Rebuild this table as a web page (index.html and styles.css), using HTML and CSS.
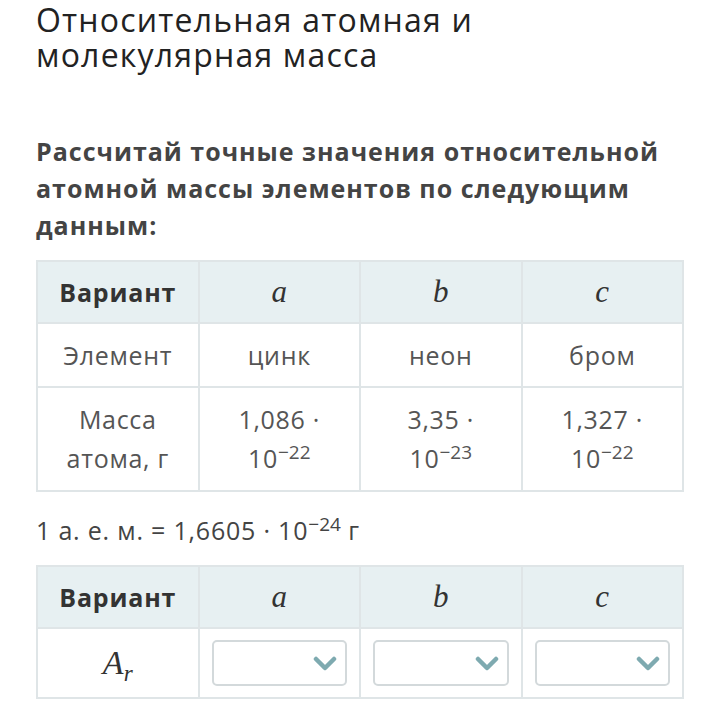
FILE: index.html
```html
<!DOCTYPE html>
<html lang="ru">
<head>
<meta charset="utf-8">
<link rel="stylesheet" href="styles.css">
</head>
<body>
<div class="page">
  <h1 class="title">Относительная атомная и<br>молекулярная масса</h1>
  <p class="task">Рассчитай точные значения относительной атомной массы элементов по следующим данным:</p>
  <table class="grid data">
    <tr class="head">
      <th class="label">Вариант</th>
      <th><span class="m">a</span></th>
      <th><span class="m">b</span></th>
      <th><span class="m">c</span></th>
    </tr>
    <tr class="r-el">
      <td>Элемент</td>
      <td>цинк</td>
      <td>неон</td>
      <td>бром</td>
    </tr>
    <tr class="r-mass">
      <td>Масса<br>атома, г</td>
      <td>1,086 ·<br>10<sup>−22</sup></td>
      <td>3,35 ·<br>10<sup>−23</sup></td>
      <td>1,327 ·<br>10<sup>−22</sup></td>
    </tr>
  </table>
  <p class="note">1 а. е. м. = 1,6605 · 10<sup>−24</sup> г</p>
  <table class="grid answer">
    <tr class="head">
      <th class="label">Вариант</th>
      <th><span class="m">a</span></th>
      <th><span class="m">b</span></th>
      <th><span class="m">c</span></th>
    </tr>
    <tr class="r-ans">
      <td><span class="m ar">A<sub>r</sub></span></td>
      <td><div class="select"><svg viewBox="0 0 24 15" width="24" height="15"><path d="M3 3 L12 12 L21 3" fill="none" stroke="#7eaab0" stroke-width="4.5" stroke-linecap="round" stroke-linejoin="round"/></svg></div></td>
      <td><div class="select"><svg viewBox="0 0 24 15" width="24" height="15"><path d="M3 3 L12 12 L21 3" fill="none" stroke="#7eaab0" stroke-width="4.5" stroke-linecap="round" stroke-linejoin="round"/></svg></div></td>
      <td><div class="select"><svg viewBox="0 0 24 15" width="24" height="15"><path d="M3 3 L12 12 L21 3" fill="none" stroke="#7eaab0" stroke-width="4.5" stroke-linecap="round" stroke-linejoin="round"/></svg></div></td>
    </tr>
  </table>
</div>
</body>
</html>
```
FILE: styles.css
```css
* { box-sizing: border-box; }
html, body { margin: 0; padding: 0; background: #fff; }
body { font-family: "Open Sans", "Noto Sans", sans-serif; color: #333; }
.page { padding: 2px 35px 0 36px; }
.title {
  margin: 0;
  font-weight: 400;
  font-size: 32px;
  line-height: 35px;
  color: #222;
  letter-spacing: 1.2px;
}
.task {
  margin: 61px 0 0 0;
  font-weight: 700;
  font-size: 25px;
  line-height: 37px;
  letter-spacing: 1px;
  color: #444;
}
.grid {
  border-collapse: collapse;
  width: 648px;
  table-layout: fixed;
  border: 2px solid #dfe5e7;
}
.grid th, .grid td {
  border: 2px solid #dfe5e7;
  text-align: center;
  vertical-align: middle;
  padding: 0 8px;
}
.data { margin-top: 16px; }
.head th { background: #e7f0f2; height: 62px; font-size: 25px; color: #333; }
.head th.label { font-weight: 700; color: #333; letter-spacing: 0.8px; }
.m { font-family: "Liberation Serif", "DejaVu Serif", serif; font-style: italic; font-weight: 400; font-size: 31px; color: #333; letter-spacing: 0; }
.r-el td { height: 64px; font-size: 25px; letter-spacing: 0.7px; color: #555; }
.r-mass td { height: 104px; font-size: 25px; letter-spacing: 0.7px; line-height: 39px; color: #555; }
sup { font-size: 0.76em; vertical-align: 0.5em; line-height: 0; letter-spacing: 0; }
.note { margin: 21px 0 0 0; font-size: 25px; line-height: 34px; letter-spacing: 0.8px; color: #444; }
.answer { margin-top: 18px; }
.r-ans td { height: 70px; padding: 0 12px; }
.ar { font-size: 34px; }
.ar sub { font-size: 0.68em; vertical-align: -0.3em; line-height: 0; }
.select {
  height: 46px;
  border: 2px solid #d3d9db;
  border-radius: 5px;
  background: #fff;
  display: flex;
  align-items: center;
  justify-content: flex-end;
  padding-right: 8px;
}
```
